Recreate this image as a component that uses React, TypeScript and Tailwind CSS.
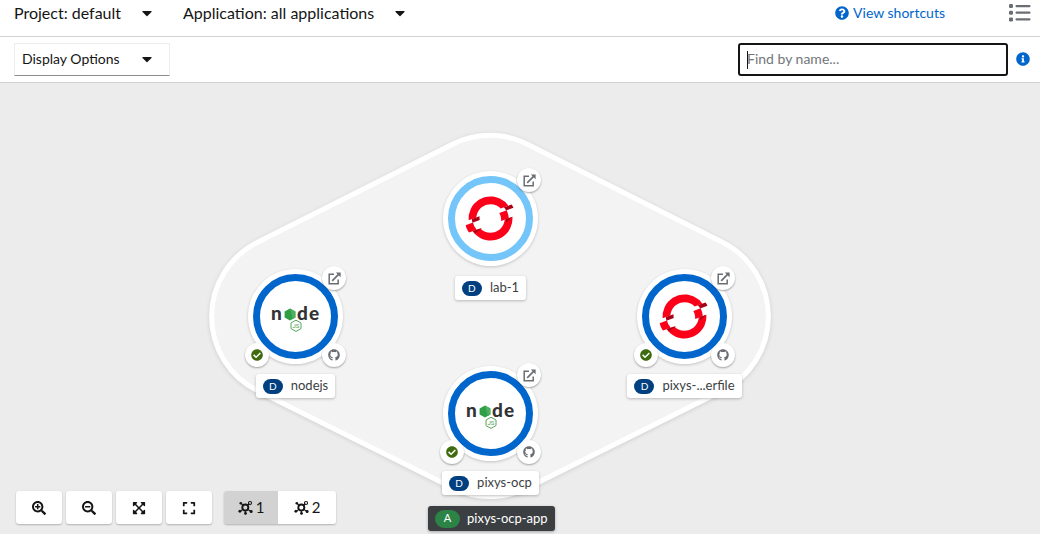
import type { ReactNode } from "react";
import {
  FaCaretDown,
  FaCheckCircle,
  FaExpand,
  FaExpandArrowsAlt,
  FaGithub,
  FaInfoCircle,
  FaQuestionCircle,
  FaSearchMinus,
  FaSearchPlus,
} from "react-icons/fa";

function ListIcon() {
  return (
    <svg viewBox="0 0 22 18" className="h-[18px] w-[22px]" fill="#6a6e73" aria-hidden="true">
      <rect x="0" y="0" width="4" height="4" rx="1.2" />
      <rect x="0" y="6.7" width="4" height="4" rx="1.2" />
      <rect x="0" y="13.4" width="4" height="4" rx="1.2" />
      <rect x="6.5" y="1" width="15" height="2.2" rx="1" />
      <rect x="6.5" y="7.6" width="15" height="2.2" rx="1" />
      <rect x="6.5" y="14.2" width="15" height="2.2" rx="1" />
    </svg>
  );
}

function OpenUrlIcon() {
  return (
    <svg viewBox="0 0 13 13" className="size-[13px]" aria-hidden="true">
      <path d="M6 2.2H1.2V11.8H10.2V7.4" fill="none" stroke="#6a6e73" strokeWidth="1.5" />
      <path d="M4.2 8.8L10.6 2.4" fill="none" stroke="#6a6e73" strokeWidth="1.7" />
      <path d="M7.8 .4H12.6V5.2Z" fill="#6a6e73" />
    </svg>
  );
}

function TopologyIcon() {
  return (
    <svg viewBox="0 0 16 16" className="size-[15px]" fill="#151515" stroke="#151515" aria-hidden="true">
      <circle cx="7.8" cy="8" r="3.2" fill="none" strokeWidth="2" />
      <path d="M3.4 3.8L5.6 6M10 6L12.2 3.8M2.8 11.6L5.2 10M10.4 10L13.4 12M7.8 11V13.6" strokeWidth="1.2" />
      <circle cx="3" cy="3.4" r="1.4" stroke="none" />
      <circle cx="12.8" cy="3.2" r="1.7" fill="none" strokeWidth="1.1" />
      <circle cx="2" cy="12" r="1.6" stroke="none" />
      <circle cx="14" cy="12.3" r="1.6" stroke="none" />
      <circle cx="8" cy="14.3" r="1.5" stroke="none" />
    </svg>
  );
}

function OpenShiftLogo() {
  return (
    <svg viewBox="-0.8 -2 64 64" className="size-[51px] shrink-0" role="img" aria-label="OpenShift">
      <g fill="#fb0018">
        <path d="M38.802 13.776c2.004.935 3.74 2.21 5.204 3.707l9.633-3.506a27.38 27.38 0 0 0-10.756-8.95c-13.77-6.42-30.198-.442-36.62 13.326a27.38 27.38 0 0 0-2.488 13.771l9.634-3.505c.16-2.087.67-4.18 1.603-6.184 4.173-8.947 14.844-12.83 23.79-8.658" />
        <path d="M9.153 35.01L0 38.342c.84 3.337 2.3 6.508 4.304 9.33l9.612-3.5a17.99 17.99 0 0 1-4.763-9.164" />
        <path d="M49.074 31.38a17.64 17.64 0 0 1-1.616 6.186c-4.173 8.947-14.843 12.83-23.79 8.657a17.71 17.71 0 0 1-5.215-3.7l-9.612 3.5c2.662 3.744 6.293 6.874 10.748 8.953 13.77 6.42 30.196.44 36.618-13.328a27.28 27.28 0 0 0 2.479-13.765z" />
        <path d="M51.445 19.618l-9.153 3.332c1.7 3.046 2.503 6.553 2.24 10.08l9.612-3.497c-.275-3.45-1.195-6.817-2.7-9.915" />
      </g>
      <g fill="#a80014">
        <path d="M17.424 27.158L7.8 30.664c.123 1.545.4 3.07.764 4.566l9.15-3.333c-.297-1.547-.403-3.142-.28-4.74" />
        <path d="M60 16.504c-.672-1.386-1.45-2.726-2.35-3.988l-9.632 3.506c1.12 1.147 2.06 2.435 2.83 3.813z" />
        <path d="M51.2 30.6L58.7 27.88L50.4 35.2Z" />
        <path d="M9.4 45.8L20.6 41.8L12 48.6Z" />
      </g>
    </svg>
  );
}

function NodeLogo() {
  return (
    <svg viewBox="0 0 52 32" className="h-[32px] w-[52px] shrink-0" role="img" aria-label="Node.js">
      <g fill="#333333" fontFamily="Lato, sans-serif" fontWeight="900" fontSize="19">
        <text x="1" y="19">n</text>
        <text x="27" y="19">d</text>
        <text x="39" y="19">e</text>
      </g>
      <path d="M20 7.4L25.4 10.5V16.5L20 19.6L14.6 16.5V10.5Z" fill="#2f9e44" />
      <path d="M20 7.4L25.4 10.5V16.5L22.8 18Z" fill="#4bb061" />
      <path d="M26 19.2L31 22V27.6L26 30.4L21 27.6V22Z" fill="#ffffff" stroke="#58a55c" strokeWidth="1" />
      <text x="26" y="27" fill="#4b9a50" fontFamily="Roboto, sans-serif" fontSize="6" textAnchor="middle">JS</text>
    </svg>
  );
}

function Decorator({ place, children }: { place: string; children: ReactNode }) {
  return (
    <span
      className={`absolute flex size-6 items-center justify-center rounded-full bg-white text-[#6a6e73] shadow-[0_1px_2px_rgba(0,0,0,0.35)] ${place}`}
    >
      {children}
    </span>
  );
}

type WorkloadProps = {
  place: string;
  name: string;
  ring: string;
  built?: boolean;
  logo: ReactNode;
};

function Workload({ place, name, ring, built, logo }: WorkloadProps) {
  return (
    <div className={`absolute flex w-[95px] flex-col items-center ${place}`}>
      <div className="relative size-[95px] shrink-0 rounded-full bg-white p-[5px] shadow-[0_1px_3px_rgba(0,0,0,0.2)]">
        <div className={`flex size-full items-center justify-center rounded-full border-[7px] ${ring}`}>{logo}</div>
        <Decorator place="-top-[3px] -right-[3px]">
          <OpenUrlIcon />
        </Decorator>
        {built && (
          <>
            <Decorator place="bottom-[-3px] left-[-3px]">
              <FaCheckCircle className="size-3 text-[#3e6b0e]" />
            </Decorator>
            <Decorator place="bottom-[-3px] right-[-3px]">
              <FaGithub className="size-3" />
            </Decorator>
          </>
        )}
      </div>
      <div className="mt-[10px] flex h-6 items-center gap-2 rounded-[3px] bg-white px-[7px] text-[13px] whitespace-nowrap text-[#3c3f42] shadow-[0_1px_3px_rgba(0,0,0,0.25)]">
        <span className="flex h-[15px] w-5 items-center justify-center rounded-full bg-[#004080] text-[10px] text-white">
          D
        </span>
        {name}
      </div>
    </div>
  );
}

function ControlButton({ label, children }: { label: string; children: ReactNode }) {
  return (
    <button
      type="button"
      aria-label={label}
      className="flex h-[33px] w-[46px] items-center justify-center rounded-[3px] bg-white text-[14px] text-[#151515] shadow-[0_1px_2px_rgba(0,0,0,0.25)]"
    >
      {children}
    </button>
  );
}

function ContextSelect({ label, value }: { label: string; value: string }) {
  return (
    <div className="relative flex items-center">
      <select
        aria-label={label}
        className="appearance-none bg-transparent pr-[33px] text-[16px] leading-[26px] text-[#151515] outline-none"
      >
        <option>{`${label}: ${value}`}</option>
      </select>
      <FaCaretDown className="pointer-events-none absolute right-0 size-4 text-[#151515]" />
    </div>
  );
}

export default function App() {
  return (
    <div className="flex min-h-screen flex-col bg-white font-['Lato','Liberation_Sans',sans-serif] text-[#151515]">
      <header className="flex items-start border-b border-[#d2d2d2] pr-[9px] pb-[10px] pl-[14px]">
        <div className="flex flex-1 gap-7">
          <ContextSelect label="Project" value="default" />
          <ContextSelect label="Application" value="all applications" />
        </div>
        <div className="flex items-center gap-16">
          <a href="#shortcuts" className="flex items-center gap-1 text-[14px] leading-[26px] text-[#0066cc]">
            <FaQuestionCircle className="size-[14px]" />
            View shortcuts
          </a>
          <button type="button" aria-label="List view">
            <ListIcon />
          </button>
        </div>
      </header>

      <div className="flex items-center border-b border-[#d2d2d2] py-[6px] pr-[10px] pl-[14px]">
        <button
          type="button"
          aria-haspopup="menu"
          className="flex h-[33px] w-[156px] items-center justify-between border border-[#ededed] border-b-[#8a8d90] pr-[14px] pb-0.5 pl-[7px] text-[14px]"
        >
          Display Options
          <FaCaretDown className="size-4" />
        </button>
        <div className="ml-auto flex items-center gap-2">
          <div className="relative">
            <input
              type="text"
              aria-label="Find by name"
              placeholder="Find by name..."
              className="h-[33px] w-[270px] rounded-[3px] border-2 border-[#151515] bg-white px-[7px] pb-0.5 text-[14px] outline-none placeholder:text-[#72767b]"
            />
            <span className="absolute top-2 left-[9px] h-[18px] w-px bg-[#151515]" />
          </div>
          <button type="button" aria-label="Search help" className="pb-0.5">
            <FaInfoCircle className="size-[14px] text-[#0066cc]" />
          </button>
        </div>
      </div>

      <main className="relative flex flex-1 flex-col overflow-hidden bg-[#ececec]">
        <svg
          viewBox="200 120 580 390"
          className="absolute top-[37px] left-[200px] h-[390px] w-[580px] overflow-visible drop-shadow-[0_1px_2px_rgba(0,0,0,0.12)]"
          aria-hidden="true"
        >
          <path
            d="M258 242L453 144A83 84 0 0 1 527 144L722 242A83 83 0 0 1 722 391L527 488A84 84 0 0 1 453 488L258 391A83 83 0 0 1 258 242Z"
            fill="#f3f3f3"
            stroke="#ffffff"
            strokeWidth="5"
          />
        </svg>

        <Workload place="top-[88px] left-[443px]" name="lab-1" ring="border-[#73c5fa]" logo={<OpenShiftLogo />} />
        <Workload place="top-[186px] left-[248px]" name="nodejs" ring="border-[#0066cc]" built logo={<NodeLogo />} />
        <Workload
          place="top-[186px] left-[637px]"
          name="pixys-...erfile"
          ring="border-[#0066cc]"
          built
          logo={<OpenShiftLogo />}
        />
        <Workload place="top-[283px] left-[443px]" name="pixys-ocp" ring="border-[#0066cc]" built logo={<NodeLogo />} />

        <div className="absolute top-[423px] left-[428px] flex h-[25px] items-center gap-[7px] rounded-[3px] bg-[#3c3f42] px-[7px] text-[13px] whitespace-nowrap text-white shadow-[0_1px_3px_rgba(0,0,0,0.3)]">
          <span className="flex h-[18px] w-[25px] items-center justify-center rounded-full bg-[#2b8345] text-[11px]">
            A
          </span>
          pixys-ocp-app
        </div>

        <div className="relative mt-auto flex gap-3 px-4 pb-[10px]">
          <div className="flex gap-1">
            <ControlButton label="Zoom in">
              <FaSearchPlus />
            </ControlButton>
            <ControlButton label="Zoom out">
              <FaSearchMinus />
            </ControlButton>
            <ControlButton label="Fit to screen">
              <FaExpandArrowsAlt />
            </ControlButton>
            <ControlButton label="Reset view">
              <FaExpand />
            </ControlButton>
          </div>
          <div className="flex h-[33px] overflow-hidden rounded-[3px] text-[15px] shadow-[0_1px_2px_rgba(0,0,0,0.25)]">
            <button type="button" className="flex w-[54px] items-center justify-center gap-[3px] bg-[#d2d2d2]">
              <TopologyIcon />1
            </button>
            <button type="button" className="flex w-[58px] items-center justify-center gap-[3px] bg-white">
              <TopologyIcon />2
            </button>
          </div>
        </div>
      </main>
    </div>
  );
}
